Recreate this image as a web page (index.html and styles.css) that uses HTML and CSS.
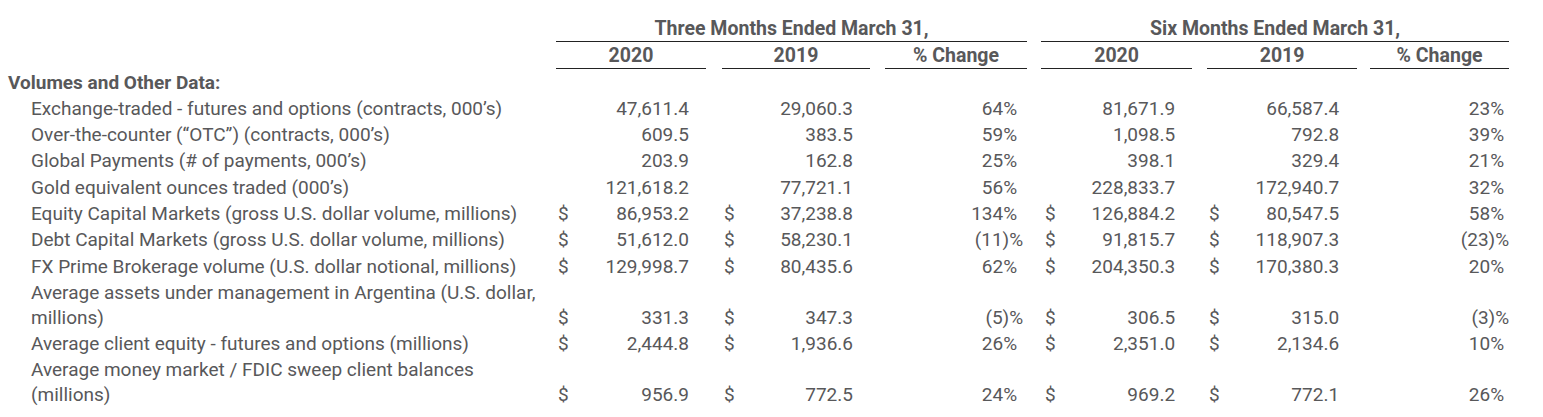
FILE: index.html
```html
<!DOCTYPE html>
<html>
<head>
<meta charset="utf-8">
<link rel="stylesheet" href="styles.css">
</head>
<body>
<table class="fin">
  <colgroup>
    <col class="c-label">
    <col class="c-cur"><col class="c-val3a">
    <col class="c-gap16">
    <col class="c-cur"><col class="c-val3b">
    <col class="c-gap15">
    <col class="c-pct3">
    <col class="c-gap14">
    <col class="c-cur"><col class="c-val6a">
    <col class="c-gap15">
    <col class="c-cur"><col class="c-val6b">
    <col class="c-gap13">
    <col class="c-pct6">
  </colgroup>
  <thead>
    <tr class="h1">
      <th></th>
      <th colspan="7" class="period">Three Months Ended March 31,</th>
      <th></th>
      <th colspan="7" class="period">Six Months Ended March 31,</th>
    </tr>
    <tr class="h2">
      <th></th>
      <th colspan="2" class="sub">2020</th>
      <th></th>
      <th colspan="2" class="sub">2019</th>
      <th></th>
      <th class="sub">% Change</th>
      <th></th>
      <th colspan="2" class="sub">2020</th>
      <th></th>
      <th colspan="2" class="sub">2019</th>
      <th></th>
      <th class="sub">% Change</th>
    </tr>
  </thead>
  <tbody>
    <tr>
      <td class="section" colspan="16">Volumes and Other Data:</td>
    </tr>
    <tr>
      <td class="label">Exchange-traded - futures and options (contracts, 000’s)</td>
      <td class="cur"></td><td class="val">47,611.4</td><td></td>
      <td class="cur"></td><td class="val">29,060.3</td><td></td>
      <td class="pct">64%</td><td></td>
      <td class="cur6"></td><td class="val">81,671.9</td><td></td>
      <td class="cur"></td><td class="val6b">66,587.4</td><td></td>
      <td class="pct6">23%</td>
    </tr>
    <tr>
      <td class="label">Over-the-counter (“OTC”) (contracts, 000’s)</td>
      <td class="cur"></td><td class="val">609.5</td><td></td>
      <td class="cur"></td><td class="val">383.5</td><td></td>
      <td class="pct">59%</td><td></td>
      <td class="cur6"></td><td class="val">1,098.5</td><td></td>
      <td class="cur"></td><td class="val6b">792.8</td><td></td>
      <td class="pct6">39%</td>
    </tr>
    <tr>
      <td class="label">Global Payments (# of payments, 000’s)</td>
      <td class="cur"></td><td class="val">203.9</td><td></td>
      <td class="cur"></td><td class="val">162.8</td><td></td>
      <td class="pct">25%</td><td></td>
      <td class="cur6"></td><td class="val">398.1</td><td></td>
      <td class="cur"></td><td class="val6b">329.4</td><td></td>
      <td class="pct6">21%</td>
    </tr>
    <tr>
      <td class="label">Gold equivalent ounces traded (000’s)</td>
      <td class="cur"></td><td class="val">121,618.2</td><td></td>
      <td class="cur"></td><td class="val">77,721.1</td><td></td>
      <td class="pct">56%</td><td></td>
      <td class="cur6"></td><td class="val">228,833.7</td><td></td>
      <td class="cur"></td><td class="val6b">172,940.7</td><td></td>
      <td class="pct6">32%</td>
    </tr>
    <tr>
      <td class="label">Equity Capital Markets (gross U.S. dollar volume, millions)</td>
      <td class="cur">$</td><td class="val">86,953.2</td><td></td>
      <td class="cur">$</td><td class="val">37,238.8</td><td></td>
      <td class="pct">134%</td><td></td>
      <td class="cur6">$</td><td class="val">126,884.2</td><td></td>
      <td class="cur">$</td><td class="val6b">80,547.5</td><td></td>
      <td class="pct6">58%</td>
    </tr>
    <tr>
      <td class="label">Debt Capital Markets (gross U.S. dollar volume, millions)</td>
      <td class="cur">$</td><td class="val">51,612.0</td><td></td>
      <td class="cur">$</td><td class="val">58,230.1</td><td></td>
      <td class="pct neg">(11)%</td><td></td>
      <td class="cur6">$</td><td class="val">91,815.7</td><td></td>
      <td class="cur">$</td><td class="val6b">118,907.3</td><td></td>
      <td class="pct6 neg">(23)%</td>
    </tr>
    <tr>
      <td class="label">FX Prime Brokerage volume (U.S. dollar notional, millions)</td>
      <td class="cur">$</td><td class="val">129,998.7</td><td></td>
      <td class="cur">$</td><td class="val">80,435.6</td><td></td>
      <td class="pct">62%</td><td></td>
      <td class="cur6">$</td><td class="val">204,350.3</td><td></td>
      <td class="cur">$</td><td class="val6b">170,380.3</td><td></td>
      <td class="pct6">20%</td>
    </tr>
    <tr>
      <td class="label">Average assets under management in Argentina (U.S. dollar, millions)</td>
      <td class="cur">$</td><td class="val">331.3</td><td></td>
      <td class="cur">$</td><td class="val">347.3</td><td></td>
      <td class="pct neg">(5)%</td><td></td>
      <td class="cur6">$</td><td class="val">306.5</td><td></td>
      <td class="cur">$</td><td class="val6b">315.0</td><td></td>
      <td class="pct6 neg">(3)%</td>
    </tr>
    <tr>
      <td class="label">Average client equity - futures and options (millions)</td>
      <td class="cur">$</td><td class="val">2,444.8</td><td></td>
      <td class="cur">$</td><td class="val">1,936.6</td><td></td>
      <td class="pct">26%</td><td></td>
      <td class="cur6">$</td><td class="val">2,351.0</td><td></td>
      <td class="cur">$</td><td class="val6b">2,134.6</td><td></td>
      <td class="pct6">10%</td>
    </tr>
    <tr>
      <td class="label">Average money market / FDIC sweep client balances (millions)</td>
      <td class="cur">$</td><td class="val">956.9</td><td></td>
      <td class="cur">$</td><td class="val">772.5</td><td></td>
      <td class="pct">24%</td><td></td>
      <td class="cur6">$</td><td class="val">969.2</td><td></td>
      <td class="cur">$</td><td class="val6b">772.1</td><td></td>
      <td class="pct6">26%</td>
    </tr>
  </tbody>
</table>
</body>
</html>
```

FILE: styles.css
```css
html, body {
  margin: 0;
  padding: 0;
  background: #ffffff;
}

body {
  padding: 16px 0 0 8px;
  font-family: Roboto, "Liberation Sans", sans-serif;
  font-size: 19px;
  color: #58585a;
}

.fin {
  table-layout: fixed;
  border-collapse: collapse;
  width: 1501px;
}

.c-label { width: 548px; }
.c-cur { width: 24px; }
.c-val3a { width: 126px; }
.c-val3b { width: 124px; }
.c-val6a { width: 127px; }
.c-val6b { width: 126px; }
.c-gap16 { width: 16px; }
.c-gap15 { width: 15px; }
.c-gap14 { width: 14px; }
.c-gap13 { width: 13px; }
.c-pct3 { width: 142px; }
.c-pct6 { width: 139px; }

.fin th,
.fin td {
  padding: 0;
  line-height: 25px;
  white-space: nowrap;
}

.fin th {
  font-weight: 700;
  font-size: 19.5px;
  text-align: center;
}

.h1 .period {
  border-bottom: 1px solid #222;
}

.h2 th {
  padding-top: 1px;
}

.h2 .sub {
  border-bottom: 1px solid #222;
}

.fin td {
  padding-top: 0.65px;
  padding-bottom: 0.65px;
  vertical-align: bottom;
}

.fin td.section {
  font-weight: 700;
  text-align: left;
}

.fin td.label {
  white-space: normal;
  padding-left: 23px;
  padding-right: 10px;
}

.fin td.cur {
  text-align: left;
  padding-left: 2px;
}

.fin td.cur6 {
  text-align: left;
  padding-left: 4px;
}

.fin td.val {
  text-align: right;
  padding-right: 17px;
}

.fin td.val6b {
  text-align: right;
  padding-right: 18px;
}

.fin td.pct {
  text-align: right;
  padding-right: 10px;
}

.fin td.pct.neg {
  padding-right: 4px;
}

.fin td.pct6 {
  text-align: right;
  padding-right: 5px;
}

.fin td.pct6.neg {
  padding-right: 0;
}
```
